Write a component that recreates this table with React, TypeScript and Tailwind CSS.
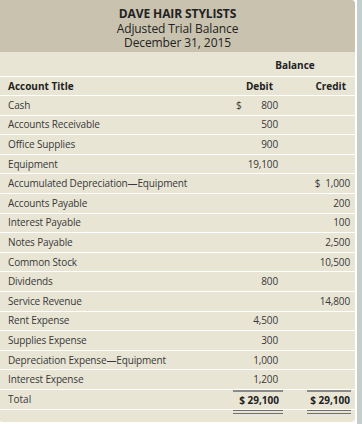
import React from 'react';

type Row = { title: string; debit?: string; credit?: string; debitSign?: boolean; creditSign?: boolean };

const rows: Row[] = [
  { title: 'Cash', debit: '800', debitSign: true },
  { title: 'Accounts Receivable', debit: '500' },
  { title: 'Office Supplies', debit: '900' },
  { title: 'Equipment', debit: '19,100' },
  { title: 'Accumulated Depreciation\u2014Equipment', credit: '1,000', creditSign: true },
  { title: 'Accounts Payable', credit: '200' },
  { title: 'Interest Payable', credit: '100' },
  { title: 'Notes Payable', credit: '2,500' },
  { title: 'Common Stock', credit: '10,500' },
  { title: 'Dividends', debit: '800' },
  { title: 'Service Revenue', credit: '14,800' },
  { title: 'Rent Expense', debit: '4,500' },
  { title: 'Supplies Expense', debit: '300' },
  { title: 'Depreciation Expense\u2014Equipment', debit: '1,000' },
  { title: 'Interest Expense', debit: '1,200' },
];

const font = { fontFamily: '"Open Sans", "Noto Sans", sans-serif' };

export default function App() {
  return (
    <div className="w-[362px] h-[424px] bg-white flex" style={font}>
      <div className="w-[355px] h-[422px] bg-[#e8e5d5] rounded-r-[4px] rounded-bl-[2px] overflow-hidden flex flex-col">
        {/* Title block */}
        <div className="h-[52px] bg-[#c9c2af] flex flex-col items-center pt-[7px] text-[12px] leading-[14.5px] text-[#222] tracking-[-0.1px]">
          <div className="font-bold">DAVE HAIR STYLISTS</div>
          <div>Adjusted Trial Balance</div>
          <div>December 31, 2015</div>
        </div>

        {/* Balance header */}
        <div className="h-[25px] border-b border-white flex items-end pb-[3px] pr-[4px] text-[10px] font-bold text-[#222]">
          <div className="flex-1" />
          <div className="w-[118px] text-center pl-[6px]">Balance</div>
        </div>

        {/* Column titles */}
        <div className="h-[19px] border-b border-white flex items-center pr-[4px] text-[10px] font-bold text-[#222]">
          <div className="flex-1 pl-[8px]">Account Title</div>
          <div className="w-[50px] text-right pr-[10px]">Debit</div>
          <div className="w-[24px]" />
          <div className="w-[44px] text-right pr-[5px]">Credit</div>
        </div>

        {/* Accounts */}
        {rows.map((r) => (
          <div
            key={r.title}
            className="h-[19.6px] border-b border-white flex items-center pr-[4px] text-[10px] text-[#383838] tracking-[-0.15px]"
          >
            <div className="flex-1 pl-[8px] whitespace-nowrap">{r.title}</div>
            <div className="w-[50px] flex justify-between pl-[3px] pr-[5px]">
              <span>{r.debitSign ? '$' : ''}</span>
              <span>{r.debit ?? ''}</span>
            </div>
            <div className="w-[24px]" />
            <div className="w-[44px] text-right pr-[1px] whitespace-nowrap">
              {r.credit ? (r.creditSign ? '$\u00a0 ' : '') + r.credit : ''}
            </div>
          </div>
        ))}

        {/* Total */}
        <div className="h-[19.6px] border-b border-white flex items-stretch pr-[4px] text-[10px] text-[#383838]">
          <div className="flex-1 pl-[8px] flex items-center">Total</div>
          <div className="w-[50px] pl-[3px] border-t-2 border-[#8a8a8a] flex items-center justify-end pr-[4px] font-bold text-[#222]">
            $ 29,100
          </div>
          <div className="w-[24px]" />
          <div className="w-[44px] border-t-2 border-[#8a8a8a] flex items-center justify-end pr-[1px] font-bold text-[#222]">
            $ 29,100
          </div>
        </div>
        <div className="flex pr-[4px]">
          <div className="flex-1" />
          <div className="w-[50px] h-[4px] border-y border-[#6f6f6f] bg-[#e8e5d5]" />
          <div className="w-[24px]" />
          <div className="w-[44px] h-[4px] border-y border-[#6f6f6f] bg-[#e8e5d5]" />
        </div>
      </div>
      <div className="w-[2px]" />
      <div className="flex-1 bg-[#c3cfca]" />
    </div>
  );
}
